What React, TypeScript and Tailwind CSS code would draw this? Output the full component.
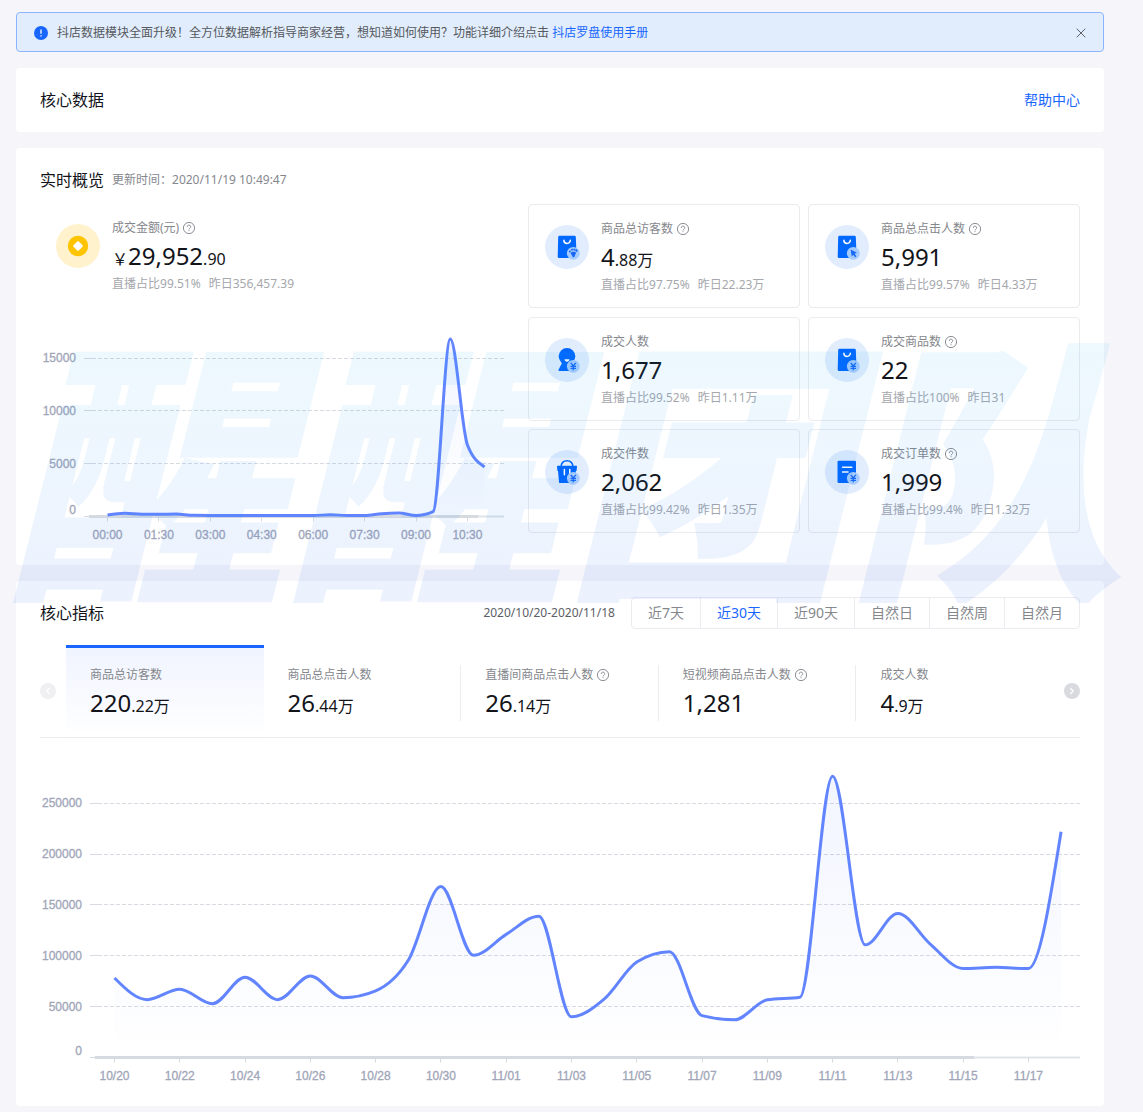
import { useId, useState } from 'react';
import type { ReactNode } from 'react';
import clsx from 'clsx';
import { ChevronLeft, ChevronRight, X } from 'lucide-react';

type Stat = {
  label: string;
  help?: boolean;
  prefix?: string;
  main: string;
  rest?: string;
  share?: string;
  yesterday?: string;
};

const cards: (Stat & { icon: ReactNode })[] = [
  { label: '商品总访客数', help: true, main: '4', rest: '.88万', share: '97.75%', yesterday: '22.23万', icon: <BagIcon badge="paw" /> },
  { label: '商品总点击人数', help: true, main: '5,991', share: '99.57%', yesterday: '4.33万', icon: <BagIcon badge="cursor" /> },
  { label: '成交人数', main: '1,677', share: '99.52%', yesterday: '1.11万', icon: <PersonIcon /> },
  { label: '成交商品数', help: true, main: '22', share: '100%', yesterday: '31', icon: <BagIcon badge="yen" /> },
  { label: '成交件数', main: '2,062', share: '99.42%', yesterday: '1.35万', icon: <BasketIcon /> },
  { label: '成交订单数', help: true, main: '1,999', share: '99.4%', yesterday: '1.32万', icon: <OrderIcon /> },
];

const metrics: Stat[] = [
  { label: '商品总访客数', main: '220', rest: '.22万' },
  { label: '商品总点击人数', main: '26', rest: '.44万' },
  { label: '直播间商品点击人数', help: true, main: '26', rest: '.14万' },
  { label: '短视频商品点击人数', help: true, main: '1,281' },
  { label: '成交人数', main: '4', rest: '.9万' },
];

const ranges = ['近7天', '近30天', '近90天', '自然日', '自然周', '自然月'];

const amountToday = [
  140, 300, 210, 210, 235, 115, 100, 100, 100, 100, 100, 100, 100, 160, 100, 100, 270, 330, 100, 470, 16800, 6770, 4690,
];
const amountLabels = ['00:00', '01:30', '03:00', '04:30', '06:00', '07:30', '09:00', '10:30'];

const visitors = [
  78200, 56900, 67200, 52900, 78900, 56900, 80200, 58800, 65500, 95600, 168100, 100500, 121100, 139000, 40000, 57400,
  93900, 104100, 41200, 37100, 56700, 59300, 276500, 110800, 141700, 111300, 87500, 88700, 87500, 222100,
];
const visitorLabels = [
  '10/20', '10/22', '10/24', '10/26', '10/28', '10/30', '11/01', '11/03', '11/05', '11/07', '11/09', '11/11', '11/13', '11/15', '11/17',
];

/* ---------- icons ---------- */

function HelpIcon() {
  return (
    <svg viewBox="0 0 14 14" className="size-3.5 shrink-0" fill="none" stroke="#8d8f96" aria-hidden>
      <circle cx="7" cy="7" r="5.6" />
      <path d="M5.3 5.9a1.7 1.7 0 1 1 2.5 1.4c-.5.3-.8.6-.8 1.1" />
      <path d="M7 9.2v1" />
    </svg>
  );
}

function Badge({ kind = 'yen' }: { kind?: 'yen' | 'paw' | 'cursor' }) {
  return (
    <>
      <circle cx="28.3" cy="28.3" r="6.4" fill="#a6cbff" />
      {kind === 'yen' && (
        <path d="M25.8 24.8l2.5 3.2 2.5-3.2M28.3 28v4.2M25.6 28.3h5.4M25.6 30.3h5.4" stroke="#1668f5" strokeWidth="1.3" fill="none" />
      )}
      {kind === 'cursor' && <path d="M25.6 24.4l6.3 3.4-2.4 1 2 2.4-1.4 1.1-2-2.5-1.3 1.9z" fill="#1668f5" />}
      {kind === 'paw' && (
        <g fill="#1668f5">
          <circle cx="24.9" cy="26.4" r="1" />
          <circle cx="27" cy="24.8" r="1" />
          <circle cx="29.3" cy="24.6" r="1" />
          <ellipse cx="31.4" cy="25.6" rx="1.1" ry="1.3" />
          <path d="M26 27.6c1.200-1.100 5-1.100 4.900.6 0 1.200-1.100 1.400-1 2.400.1 1.800-2.200 2.100-2.600.6-.3-1.200-2.100-2.300-1.300-3.600z" />
        </g>
      )}
    </>
  );
}

function IconDisc({ children }: { children: ReactNode }) {
  return (
    <svg viewBox="0 0 44 44" className="size-11 shrink-0" aria-hidden>
      <circle cx="22" cy="22" r="22" fill="#e1edfd" />
      {children}
    </svg>
  );
}

function BagIcon({ badge }: { badge: 'yen' | 'paw' | 'cursor' }) {
  return (
    <IconDisc>
      <path d="M14.5 10.8h15a1.3 1.3 0 0 1 1.3 1.2l.8 19.7a1.3 1.3 0 0 1-1.3 1.3H14a1.3 1.3 0 0 1-1.3-1.3l.5-19.7a1.3 1.3 0 0 1 1.3-1.2z" fill="#0067ff" />
      <path d="M18.9 15.2a3.2 3.2 0 0 0 6.4 0" stroke="#fff" strokeWidth="1.5" strokeLinecap="round" fill="none" />
      <Badge kind={badge} />
    </IconDisc>
  );
}

function PersonIcon() {
  return (
    <IconDisc>
      <circle cx="22" cy="18.3" r="8.3" fill="#0067ff" />
      <path d="M17 25h10l3 8H14.2c-.7 0-1-.6-.7-1.2z" fill="#0067ff" />
      <path d="M19.5 21.2h5c-.2 1.600-1.100 2.500-2.500 2.500s-2.300-.9-2.500-2.500z" fill="#fff" />
      <Badge />
    </IconDisc>
  );
}

function BasketIcon() {
  return (
    <IconDisc>
      <path d="M16 17c.2-4 2.600-6.300 6-6.300s5.800 2.300 6 6.300" stroke="#0067ff" strokeWidth="1.5" fill="none" />
      <path d="M12.800 15.800h18.400c.5 0 .9.400.8.900l-.5 4.300h-.7l-.9 11.900H14.100L13 21h-.5l-.5-4.300c0-.5.3-.9.8-.9z" fill="#0067ff" />
      <path d="M19.4 19.5v5.3M24.8 19.5v5.3" stroke="#fff" strokeWidth="1.5" strokeLinecap="round" />
      <Badge />
    </IconDisc>
  );
}

function OrderIcon() {
  return (
    <IconDisc>
      <rect x="12.5" y="10.8" width="18.5" height="22.3" rx="1.3" fill="#0067ff" />
      <path d="M17.6 17.3h9.2M17.6 22h5.4" stroke="#fff" strokeWidth="1.6" strokeLinecap="round" />
      <Badge />
    </IconDisc>
  );
}

function CoinIcon() {
  return (
    <svg viewBox="0 0 44 44" className="size-11 shrink-0" aria-hidden>
      <circle cx="22" cy="22" r="22" fill="#fff2cc" />
      <circle cx="22" cy="22" r="10.2" fill="#ffc400" />
      <rect x="18.3" y="18.3" width="7.4" height="7.4" rx="1" fill="#fff" transform="rotate(45 22 22)" />
    </svg>
  );
}

/* ---------- chart ---------- */

type Point = [number, number];

// monotone cubic interpolation, so peaks never overshoot
function smoothPath(points: Point[]) {
  const n = points.length;
  const slopes = points.slice(1).map(([x, y], i) => (y - points[i][1]) / (x - points[i][0]));
  const tangents = points.map((_, i) => {
    if (i === 0 || i === n - 1) return 0;
    const a = slopes[i - 1];
    const b = slopes[i];
    if (a * b <= 0) return 0;
    return Math.sign(a) * Math.min(Math.abs(a), Math.abs(b), Math.abs(a + b) / 4) * 2;
  });
  tangents[0] = (3 * slopes[0] - tangents[1]) / 2;
  tangents[n - 1] = (3 * slopes[n - 2] - tangents[n - 2]) / 2;

  return points.slice(1).reduce((d, [x, y], i) => {
    const [px, py] = points[i];
    const h = (x - px) / 3;
    return `${d}C${px + h},${py + h * tangents[i]} ${x - h},${y - h * tangents[i + 1]} ${x},${y}`;
  }, `M${points[0][0]},${points[0][1]}`);
}

type ChartProps = {
  title: string;
  width: number;
  height: number;
  left: number;
  baseline: number;
  tick: number;
  tickHeight: number;
  tickCount: number;
  firstX: number;
  stepX: number;
  labelEvery: number;
  barEnd: number;
  values: number[];
  labels: string[];
};

function LineChart(props: ChartProps) {
  const { title, width, height, left, baseline, tick, tickHeight, tickCount, firstX, stepX, labelEvery, barEnd, values, labels } = props;
  const fillId = useId();
  const points = values.map((v, i): Point => [firstX + i * stepX, baseline - (v / tick) * tickHeight]);
  const line = smoothPath(points);
  const ticks = Array.from({ length: tickCount + 1 }, (_, i) => i);

  return (
    <svg viewBox={`0 0 ${width} ${height}`} className="block w-full" role="img" aria-label={title}>
      <defs>
        <linearGradient id={fillId} x1="0" y1="0" x2="0" y2="1">
          <stop offset="0" stopColor="#5b82ff" stopOpacity="0.08" />
          <stop offset="1" stopColor="#5b82ff" stopOpacity="0" />
        </linearGradient>
      </defs>
      <g className="font-['Liberation_Sans',Arial,sans-serif] text-[12px]" fill="#a0a5b8" stroke="#a0a5b8" strokeWidth="0.3">
        {ticks.map((i) => (
          <text key={i} x={left - 8} y={i === 0 ? baseline - 3 : Math.round(baseline - i * tickHeight) + 4} textAnchor="end">
            {i * tick}
          </text>
        ))}
        {labels.map((label, i) => (
          <text key={label} x={firstX + i * labelEvery * stepX} y={baseline + 22} textAnchor="middle">
            {label}
          </text>
        ))}
      </g>
      {ticks.slice(1).map((i) => {
        const y = Math.floor(baseline - i * tickHeight) + 0.5;
        return (
          <g key={i} stroke="#d6dbe2">
            <path d={`M${left} ${y}h8`} />
            <path d={`M${left + 8} ${y}H${width}`} strokeDasharray="4 2" />
          </g>
        );
      })}
      <path d={`M${left} ${baseline}H${width}`} stroke="#d6dbe2" />
      <path d={`M${barEnd} ${baseline}H${width}`} stroke="#dfe3e8" strokeWidth="2" />
      <path d={`M${left + 5} ${baseline}H${barEnd}`} stroke="#d6dbe2" strokeWidth="3" />
      {labels.map((label, i) => (
        <path key={label} d={`M${Math.floor(firstX + i * labelEvery * stepX) + 0.5} ${baseline}v5`} stroke="#d6dbe2" />
      ))}
      <path d={`${line}V${baseline}H${firstX}Z`} fill={`url(#${fillId})`} />
      <path d={line} fill="none" stroke="#6285ff" strokeWidth="3" strokeLinejoin="round" />
    </svg>
  );
}

/* ---------- blocks ---------- */

function StatLabel({ stat }: { stat: Stat }) {
  return (
    <span className="flex items-center gap-[3px] text-xs leading-5 text-[#85878d]">
      {stat.label}
      {stat.help && <HelpIcon />}
    </span>
  );
}

function StatValue({ stat }: { stat: Stat }) {
  return (
    <span className="block text-2xl leading-9 whitespace-nowrap text-[#12141a]">
      {stat.prefix && <span className="text-base leading-none">{stat.prefix}</span>}
      {stat.main}
      {stat.rest && <span className="text-base leading-none">{stat.rest}</span>}
    </span>
  );
}

function StatBlock({ stat, icon }: { stat: Stat; icon: ReactNode }) {
  return (
    <div className="flex gap-3 px-4 pt-3.5 pb-3">
      <div className="pt-1.5">{icon}</div>
      <div>
        <StatLabel stat={stat} />
        <StatValue stat={stat} />
        <p className="flex gap-2 text-xs leading-5 whitespace-nowrap text-[#a5a7ad]">
          <span>直播占比{stat.share}</span>
          <span>昨日{stat.yesterday}</span>
        </p>
      </div>
    </div>
  );
}

export default function App() {
  const [noticeOpen, setNoticeOpen] = useState(true);
  const [range, setRange] = useState('近30天');
  const [metric, setMetric] = useState(0);

  return (
    <div className="relative min-h-screen overflow-hidden bg-[#f5f5fa] pt-3 pr-[39px] pb-1.5 pl-4 font-['Noto_Sans','Noto_Sans_CJK_SC',sans-serif]">
      <main className="flex flex-col gap-4">
        {noticeOpen && (
          <div className="flex h-10 items-center rounded border border-[#8ab4fb] bg-[#e1edfc] pt-0.5 pr-3.5 pl-4 text-xs text-[#55585c]">
            <svg viewBox="0 0 16 16" className="mr-2 size-4 shrink-0" aria-hidden>
              <circle cx="8" cy="8" r="7" fill="#1966ff" />
              <path d="M8 4.5v4.2M8 10.3v1.3" stroke="#fff" strokeWidth="1.3" />
            </svg>
            <p>
              抖店数据模块全面升级！全方位数据解析指导商家经营，想知道如何使用？功能详细介绍点击{' '}
              <a href="#manual" className="text-[#1966ff]">抖店罗盘使用手册</a>
            </p>
            <button type="button" aria-label="关闭" onClick={() => setNoticeOpen(false)} className="ml-auto text-[#5c6066]">
              <X size={16} strokeWidth={1.5} />
            </button>
          </div>
        )}

        <section className="flex h-16 items-center justify-between rounded bg-white px-6">
          <h1 className="text-base text-[#12141a]">核心数据</h1>
          <a href="#help" className="text-sm text-[#1966ff]">帮助中心</a>
        </section>

        <section className="rounded bg-white px-6 pt-5 pb-[17px]">
          <div className="mb-3 flex items-center gap-2">
            <h2 className="text-base leading-6 text-[#12141a]">实时概览</h2>
            <span className="text-xs leading-6 text-[#85878d]">更新时间：2020/11/19 10:49:47</span>
          </div>
          <div className="grid grid-cols-[29fr_34.5fr] gap-6">
            <div>
              <StatBlock
                icon={<CoinIcon />}
                stat={{ label: '成交金额(元)', help: true, prefix: '￥', main: '29,952', rest: '.90', share: '99.51%', yesterday: '356,457.39' }}
              />
              <LineChart
                title="成交金额"
                width={464}
                height={242}
                left={44}
                baseline={210.5}
                tick={5000}
                tickHeight={52.8}
                tickCount={3}
                firstX={67.5}
                stepX={17.14}
                labelEvery={3}
                barEnd={438}
                values={amountToday}
                labels={amountLabels}
              />
            </div>
            <div className="grid min-h-[329px] grid-cols-2 content-between gap-x-2 self-start">
              {cards.map(({ icon, ...stat }) => (
                <div key={stat.label} className="rounded border border-[#ebecf0]">
                  <StatBlock icon={icon} stat={stat} />
                </div>
              ))}
            </div>
          </div>
        </section>

        <section className="rounded bg-white px-6 py-4">
          <div className="flex items-center gap-4">
            <h2 className="mr-auto text-base text-[#12141a]">核心指标</h2>
            <span className="text-xs text-[#5c6066]">2020/10/20-2020/11/18</span>
            <div className="flex h-8 divide-x divide-[#ebecf0] rounded border border-[#ebecf0]">
              {ranges.map((item) => (
                <button
                  key={item}
                  type="button"
                  onClick={() => setRange(item)}
                  className={clsx('px-4 text-sm', item === range ? 'text-[#1966ff]' : 'text-[#85878d]')}
                >
                  {item}
                </button>
              ))}
            </div>
          </div>

          <div className="mt-4 flex items-center gap-2.5 border-b border-[#ebecf0]">
            <button type="button" aria-label="上一页" className="grid size-4 place-items-center rounded-full bg-[#f0f0f3] text-white">
              <ChevronLeft size={10} strokeWidth={3} />
            </button>
            <div className="grid flex-1 grid-cols-5">
              {metrics.map((stat, i) => (
                <button
                  key={stat.label}
                  type="button"
                  onClick={() => setMetric(i)}
                  className={clsx(
                    'h-[92px] border-t-[3px] pt-4 pb-4 text-left',
                    i === metric ? 'border-[#1966ff] bg-linear-to-b from-[#f0f4ff] to-white' : 'border-transparent',
                  )}
                >
                  <span className={clsx('block border-r pl-6', i > 0 && i < metrics.length - 1 ? 'border-[#ebecf0]' : 'border-transparent')}>
                    <StatLabel stat={stat} />
                    <StatValue stat={stat} />
                  </span>
                </button>
              ))}
            </div>
            <button type="button" aria-label="下一页" className="grid size-4 place-items-center rounded-full bg-[#d9dae0] text-white">
              <ChevronRight size={10} strokeWidth={3} />
            </button>
          </div>

          <LineChart
            title="商品总访客数"
            width={1040}
            height={352}
            left={50}
            baseline={319.5}
            tick={50000}
            tickHeight={50.84}
            tickCount={5}
            firstX={74.5}
            stepX={32.64}
            labelEvery={2}
            barEnd={934}
            values={visitors}
            labels={visitorLabels}
          />
        </section>
      </main>

      {/* watermark */}
      <div
        aria-hidden
        className="pointer-events-none absolute top-[315px] left-1 bg-linear-to-b from-[#00b4f5]/7 to-[#2f6cf0]/9 bg-clip-text pr-8 font-['Noto_Sans_CJK_SC',sans-serif] text-[280px] leading-[288px] font-black whitespace-nowrap text-transparent italic select-none"
      >
        醒醒团队
      </div>
    </div>
  );
}
